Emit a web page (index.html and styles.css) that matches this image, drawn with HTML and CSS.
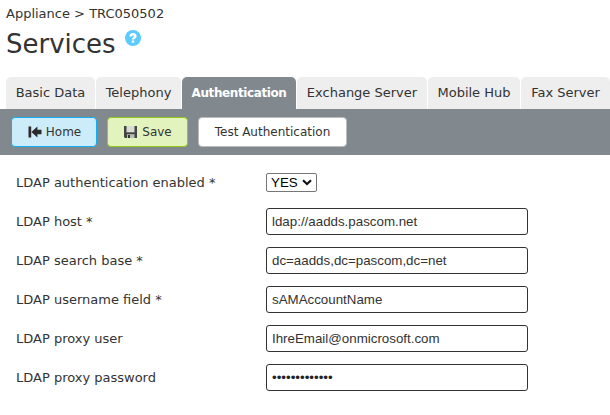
FILE: index.html
```html
<!DOCTYPE html>
<html lang="en">
<head>
<meta charset="utf-8">
<title>Services</title>
<link rel="stylesheet" href="styles.css">
</head>
<body>
<header class="header">
  <div class="crumbs">Appliance &gt; TRC050502</div>
  <div class="heading">
    <h1>Services</h1>
    <svg class="help" viewBox="0 0 16 16"><circle cx="8" cy="8" r="8" fill="#5ccbff"/><path d="M5.6 6.4C5.6 3.5 10.4 3.5 10.4 6.2C10.4 7.9 8 7.8 8 9.5" fill="none" stroke="#fff" stroke-width="2.4"/><rect x="6.8" y="10.5" width="2.4" height="2.2" fill="#fff"/></svg>
  </div>
</header>
<nav class="tabs">
  <a class="tab basic">Basic Data</a>
  <a class="tab telephony">Telephony</a>
  <a class="tab active">Authentication</a>
  <a class="tab exchange">Exchange Server</a>
  <a class="tab mobile">Mobile Hub</a>
  <a class="tab fax">Fax Server</a>
</nav>
<div class="toolbar">
  <button class="btn home"><svg class="icon" viewBox="0 0 14 12"><path d="M.5 .5h2.7v11H.5zM3.4 6l6-5.5v3.2H13.5v4.6H9.4v3.2z" fill="#2b2b2b"/></svg>Home</button>
  <button class="btn save"><svg class="icon" viewBox="0 0 14 12"><path d="M0 0h13v12H1L0 11z" fill="#444"/><path d="M2.5 0h8v6.3h-8z" fill="#d8ddd2"/><path d="M3 8.2h7.5V12H3z" fill="#b9beb4"/><path d="M4 9h2v3H4z" fill="#333"/></svg>Save</button>
  <button class="btn test">Test Authentication</button>
</div>
<form class="form">
  <label for="enabled">LDAP authentication enabled *</label>
  <div class="select"><select id="enabled"><option>YES</option></select><svg class="arrow" viewBox="0 0 10 7"><path d="M1 1.2L5 5L9 1.2" fill="none" stroke="#111" stroke-width="2.1"/></svg></div>
  <label for="host">LDAP host *</label><input id="host" value="ldap://aadds.pascom.net">
  <label for="base">LDAP search base *</label><input id="base" value="dc=aadds,dc=pascom,dc=net">
  <label for="field">LDAP username field *</label><input id="field" value="sAMAccountName">
  <label for="user">LDAP proxy user</label><input id="user" value="IhreEmail@onmicrosoft.com">
  <label for="pass">LDAP proxy password</label><input id="pass" class="password" type="password" value="abcdefghijklm">
</form>
</body>
</html>
```
FILE: styles.css
```css
* { box-sizing: border-box; }
body {
  margin: 0;
  background: #fff;
  color: #333;
  font: 13px/16px "DejaVu Sans", sans-serif;
  overflow: hidden;
}
.header { height: 77px; padding: 6px 6px 0; }
.crumbs { white-space: nowrap; }
.heading { display: flex; gap: 10px; }
h1 { width: 109px; margin: 6px 0 0; font-size: 26px; line-height: 32px; font-weight: 400; }
.help { width: 16px; height: 16px; margin-top: 8px; }
.tabs { display: flex; gap: 1px; height: 32px; padding-left: 6px; }
.tab {
  flex: none;
  border-radius: 5px 5px 0 0;
  background: #eee;
  line-height: 31px;
  text-align: center;
  white-space: nowrap;
}
.basic { width: 89px; }
.telephony { width: 85px; }
.active { width: 114px; background: #81888e; color: #fff; font-size: 12px; font-weight: 700; line-height: 33px; letter-spacing: -.4px; }
.exchange { width: 130px; }
.mobile { width: 92px; }
.fax { width: 89px; }
.toolbar { display: flex; gap: 10px; height: 46px; padding: 8px 11px; background: #81888e; }
.btn {
  display: flex;
  align-items: center;
  justify-content: center;
  height: 30px;
  padding: 0;
  border: 1px solid #bbb;
  border-radius: 4px;
  background: #fff;
  color: #333;
  font: 12px/16px "DejaVu Sans", sans-serif;
  white-space: nowrap;
}
.home { width: 86px; padding-left: 1px; border-color: #12aef5; background: #cdecfa; }
.save { width: 81px; padding-left: 1px; border-color: #93cc17; background: #e2f3bd; }
.test { width: 149px; }
.icon { width: 14px; height: 12px; margin-right: 4px; }
.form {
  display: grid;
  grid-template-columns: 250px 262px;
  grid-template-rows: 27px repeat(5, 27px);
  row-gap: 12px;
  align-items: center;
  padding: 14px 16px;
}
.select { display: grid; width: 51px; height: 19px; align-items: center; }
.select > * { grid-area: 1 / 1; }
select {
  appearance: none;
  width: 51px;
  height: 19px;
  padding: 0 4px;
  border: 1px solid #767676;
  border-radius: 2px;
  background: #fff;
  color: #000;
  font: 13.33px/17px "Liberation Sans", sans-serif;
}
.arrow { width: 10px; height: 7px; justify-self: end; margin-right: 5px; pointer-events: none; }
input {
  width: 262px;
  height: 27px;
  padding: 0 5px;
  border: 1px solid #333;
  border-radius: 3px;
  background: #fff;
  color: #333;
  font: 13.33px "Liberation Sans", sans-serif;
}
.password { color: #222; }
```
